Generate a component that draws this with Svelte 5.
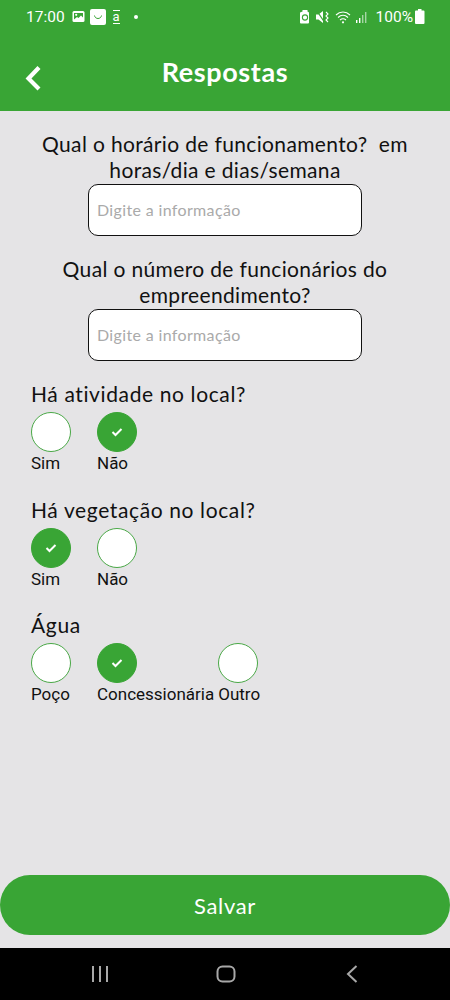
<script>
  const groups = [
    { title: 'Há atividade no local?', options: ['Sim', 'Não'], checked: 'Não' },
    { title: 'Há vegetação no local?', options: ['Sim', 'Não'], checked: 'Sim' },
    { title: 'Água', options: ['Poço', 'Concessionária', 'Outro'], checked: 'Concessionária' },
  ];
</script>

<div class="screen">
  <header>
    <div class="status">
      <div class="status-left">
        <span class="time">17:00</span>
        <svg width="13" height="13" viewBox="0 0 13 13">
          <rect x="0.5" y="1" width="12" height="11" rx="1.5" fill="#fff" />
          <path d="M2 3h9v4.500L9 5.500 6.500 8 5 7 2 9.500z" fill="#39a535" />
          <circle cx="4.200" cy="4.800" r="1.100" fill="#fff" />
        </svg>
        <svg width="16" height="16" viewBox="0 0 16 16">
          <rect width="16" height="16" rx="2" fill="#fff" />
          <path d="M4.500 6.500c.6 4 6.400 4 7 0" fill="none" stroke="#39a535" stroke-width="1" />
        </svg>
        <span class="amazon">a</span>
        <span class="dot"></span>
      </div>
      <div class="status-right">
        <svg width="10" height="15" viewBox="0 0 10 15">
          <path d="M2.500 1h5v1.500l1.500 1V13.500a1 1 0 0 1-1 1H1a1 1 0 0 1-1-1V3.500l2.500-1z" fill="#fff" />
          <circle cx="5" cy="8.500" r="2.600" fill="none" stroke="#39a535" stroke-width="1.100" />
        </svg>
        <svg class="mute" width="14" height="14" viewBox="0 0 14 14">
          <path d="M0 4.500h2.500L7 1v12L2.500 9.500H0z" fill="#fff" />
          <path d="M1 1l8 12" stroke="#39a535" stroke-width="1.300" />
          <path d="M10 2l2 2-2 2 2 2-2 2 2 2" fill="none" stroke="#fff" stroke-width="1.100" />
        </svg>
        <svg class="wifi" width="17" height="14" viewBox="0 0 17 14">
          <g fill="none" stroke="#fff" stroke-width="1.100">
            <path d="M1 5c4-4 10-4 14 0" />
            <path d="M3 7.500c3-2.800 7-2.800 10 0" />
            <path d="M5 10c2-1.700 4-1.700 6 0" />
          </g>
          <circle cx="8" cy="12.300" r="1.100" fill="#fff" />
        </svg>
        <svg class="signal" width="13" height="13" viewBox="0 0 13 13">
          <rect x="0" y="10" width="1.400" height="3" fill="#fff" />
          <rect x="3" y="8" width="1.400" height="5" fill="#fff" />
          <rect x="6" y="5" width="1.400" height="8" fill="#fff" opacity="0.55" />
          <rect x="9" y="2" width="1.400" height="11" fill="#fff" opacity="0.55" />
        </svg>
        <span class="battery-text">100%</span>
        <svg width="10" height="15" viewBox="0 0 10 15">
          <path d="M3 0h3.500v1.500H8.500a1 1 0 0 1 1 1V14a1 1 0 0 1-1 1H1a1 1 0 0 1-1-1V2.500a1 1 0 0 1 1-1h2z" fill="#fff" />
        </svg>
      </div>
    </div>
    <div class="bar">
      <svg class="back" width="18" height="28" viewBox="0 0 18 28">
        <path d="M15 3.500L4.500 14.500 15 25" fill="none" stroke="#fff" stroke-width="4.200" />
      </svg>
      <h1>Respostas</h1>
    </div>
  </header>

  <main>
    <section class="question">
      <p>Qual o horário de funcionamento?&nbsp; em horas/dia e dias/semana</p>
      <input placeholder="Digite a informação" />
    </section>
    <section class="question">
      <p>Qual o número de funcionários do empreendimento?</p>
      <input placeholder="Digite a informação" />
    </section>

    {#each groups as group}
      <section class="group">
        <h2>{group.title}</h2>
        <div class="options">
          {#each group.options as option}
            <div class="option">
              <span class="radio" class:checked={group.checked === option}>
                {#if group.checked === option}
                  <svg width="12" height="10" viewBox="0 0 12 10">
                    <path d="M1.500 5l3 3 6-6" fill="none" stroke="#fff" stroke-width="2" />
                  </svg>
                {/if}
              </span>
              <span class="label">{option}</span>
            </div>
          {/each}
        </div>
      </section>
    {/each}

    <button>Salvar</button>
  </main>

  <nav>
    <svg width="18" height="18" viewBox="0 0 18 18">
      <path d="M2 1v16M9 1v16M16 1v16" stroke="#a8a8a8" stroke-width="2" />
    </svg>
    <svg width="20" height="18" viewBox="0 0 20 18">
      <rect x="1.500" y="1.500" width="17" height="15" rx="5" fill="none" stroke="#a8a8a8" stroke-width="2" />
    </svg>
    <svg class="nav-back" width="12" height="18" viewBox="0 0 12 18">
      <path d="M10.500 1L2 9l8.500 8" fill="none" stroke="#a8a8a8" stroke-width="2" />
    </svg>
  </nav>
</div>

<style>
  :global(body) {
    margin: 0;
    background: #e5e4e6;
    font-family: Lato, 'Noto Sans', sans-serif;
  }

  .screen {
    width: 450px;
    height: 1000px;
    display: flex;
    flex-direction: column;
    overflow: hidden;
    background: #e5e4e6;
  }

  header {
    height: 111px;
    flex: none;
    background: #39a535;
    color: #fff;
  }

  .status {
    height: 33px;
    display: flex;
    justify-content: space-between;
    align-items: center;
    padding: 0 25px 0 26px;
  }

  .status-left,
  .status-right {
    display: flex;
    align-items: center;
  }

  .time {
    font-family: Roboto, sans-serif;
    font-size: 15.500px;
    margin-right: 7px;
  }

  .status-left svg {
    margin-right: 5px;
  }

  .amazon {
    font-family: Roboto, sans-serif;
    font-size: 13px;
    margin-left: 2px;
    padding-bottom: 1px;
    border-top: 1px solid #fff;
    border-bottom: 1px solid #fff;
    line-height: 11px;
  }

  .dot {
    width: 4px;
    height: 4px;
    border-radius: 50%;
    background: #fff;
    margin-left: 14px;
  }

  .mute {
    margin-left: 6px;
  }

  .wifi {
    margin-left: 5px;
  }

  .signal {
    margin-left: 4px;
  }

  .battery-text {
    font-family: Roboto, sans-serif;
    font-size: 15.500px;
    margin: 0 2px 0 7px;
  }

  .bar {
    height: 78px;
    display: flex;
    align-items: center;
    justify-content: center;
    position: relative;
  }

  .back {
    position: absolute;
    left: 24px;
    top: 31px;
  }

  h1 {
    margin: 0 0 2px;
    font-size: 27px;
    font-weight: 700;
    letter-spacing: 0.6px;
  }

  main {
    flex: 1;
    display: flex;
    flex-direction: column;
    position: relative;
    color: #111;
  }

  .question {
    display: flex;
    flex-direction: column;
    align-items: center;
    padding-top: 20px;
  }

  .question p {
    margin: 0;
    width: 390px;
    text-align: center;
    font-size: 21px;
    line-height: 26px;
    letter-spacing: 0.35px;
  }

  input {
    width: 274px;
    height: 52px;
    box-sizing: border-box;
    margin-top: 1px;
    padding: 0 8px 2px;
    border: 1px solid #111;
    border-radius: 10px;
    background: #fff;
    font: 16px Lato, sans-serif;
    letter-spacing: 0.35px;
  }

  input::placeholder {
    color: #aaa;
    opacity: 1;
  }

  .group {
    padding: 0 31px;
    margin-top: 23.500px;
  }

  .question + .group {
    margin-top: 20px;
  }

  h2 {
    margin: 0 0 5px;
    font-size: 21px;
    line-height: 26px;
    font-weight: 400;
    letter-spacing: 0.62px;
  }

  .options {
    display: flex;
  }

  .option {
    min-width: 62px;
    padding-right: 4px;
    display: flex;
    flex-direction: column;
    align-items: flex-start;
  }

  .radio {
    width: 40px;
    height: 40px;
    box-sizing: border-box;
    border-radius: 50%;
    border: 1.500px solid #4aa847;
    background: #fff;
    display: flex;
    align-items: center;
    justify-content: center;
  }

  .radio.checked {
    background: #39a535;
    border-color: #39a535;
  }

  .label {
    font-family: Roboto, sans-serif;
    font-size: 17px;
    line-height: 20px;
    margin-top: 1px;
  }

  button {
    position: absolute;
    left: 0;
    right: 0;
    bottom: 13px;
    height: 60px;
    border: none;
    border-radius: 30px;
    background: #39a535;
    color: #fff;
    font: 22px Lato, sans-serif;
    letter-spacing: 0.7px;
  }

  nav {
    height: 52px;
    flex: none;
    background: #000;
    display: flex;
    align-items: center;
    padding-left: 91px;
    gap: 107px;
  }

  .nav-back {
    margin-left: 3px;
  }
</style>
